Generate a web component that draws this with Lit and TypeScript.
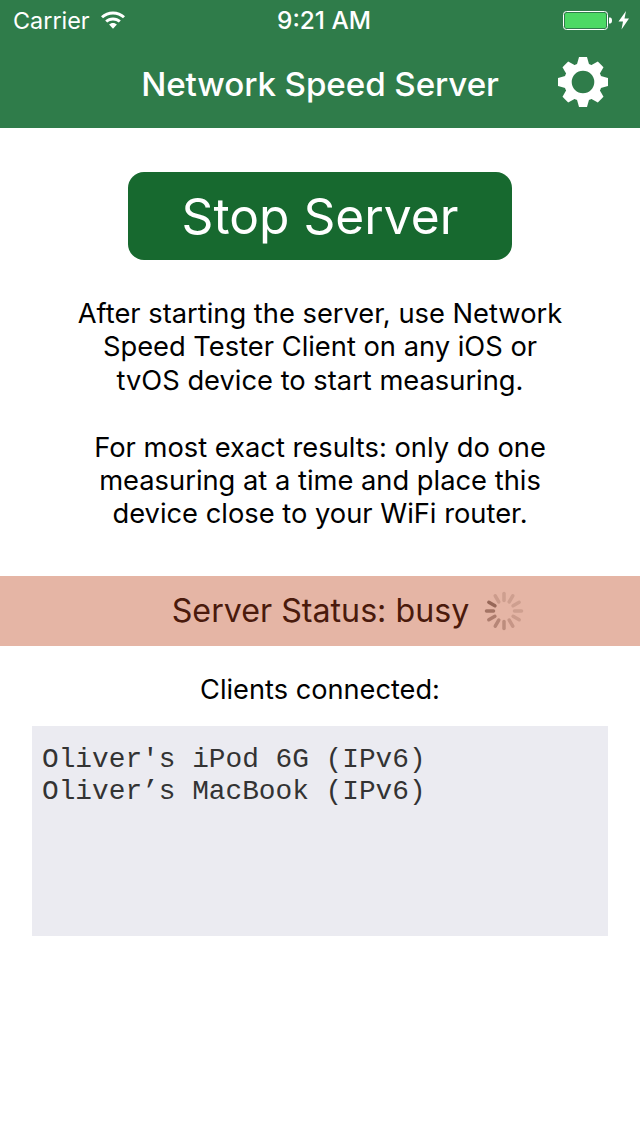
import { LitElement, html, css, svg } from "lit";
import { customElement } from "lit/decorators.js";

const spokes = [
  [90, 0.26], [120, 0.3], [150, 0.36], [180, 0.42], [210, 0.5], [240, 0.16],
  [270, 0.14], [300, 0.14], [330, 0.14], [0, 0.14], [30, 0.16], [60, 0.2],
];

@customElement("app-root")
export class AppRoot extends LitElement {
  static styles = css`
    :host { display: block; width: 640px; height: 1136px; background: #fff; overflow: hidden;
      font-family: Inter, "Liberation Sans", sans-serif; color: #000; }
    .header { height: 128px; background: #2f7c4a; color: #fff; box-sizing: border-box; display: flex; flex-direction: column; }
    .status { height: 40px; display: flex; align-items: center; justify-content: space-between; padding: 0 10px 0 13px; position: relative; font-size: 23.4px; }
    .left { display: flex; align-items: center; gap: 10px; font-weight: 400; }
    .time { position: absolute; left: 8px; right: 0; text-align: center; font-weight: 500; font-size: 24.4px; }
    .right { display: flex; align-items: center; gap: 6px; }
    .nav { flex: 1; display: flex; align-items: center; justify-content: center; position: relative; }
    .title { font-size: 33.2px; font-weight: 500; letter-spacing: -0.1px; }
    .gear { position: absolute; left: 557px; top: 16px; }
    .main { display: flex; flex-direction: column; align-items: center; }
    .btn { margin-top: 44px; width: 384px; height: 88px; border-radius: 16px; background: #17692f; color: #fff;
      display: flex; align-items: center; justify-content: center; font-size: 49.7px; font-weight: 400; }
    .info { margin-top: 37px; font-size: 27.3px; line-height: 33.4px; text-align: center; }
    .gap { height: 33.4px; }
    .bar { margin-top: 45px; width: 100%; height: 70px; background: #e5b5a5; color: #4a1a0c; display: flex; align-items: center; justify-content: center; gap: 15px; font-size: 32.2px; padding-left: 56px; box-sizing: border-box; }
    .clients { margin-top: 27px; font-size: 27.2px; line-height: 34px; }
    .list { margin-top: 19px; width: 576px; height: 210px; background: #ebebf1; box-sizing: border-box; padding: 18px 10px;
      font-family: "Liberation Mono", monospace; font-size: 27.8px; line-height: 32px; color: #333; white-space: pre; }
  `;

  render() {
    return html`
      <div class="header">
        <div class="status">
          <div class="left">
            <span>Carrier</span>
            <svg width="26" height="20" viewBox="0 0 26 20">
              <path fill="#fff" d="M13 1.5C8.4 1.5 4.2 3.3 1 6.2l2 2.1C5.7 5.9 9.2 4.4 13 4.4s7.3 1.5 10 3.9l2-2.1C21.8 3.3 17.6 1.5 13 1.5z"/>
              <path fill="#fff" d="M13 7.5c-3 0-5.7 1.1-7.8 3l2 2.1c1.6-1.4 3.6-2.2 5.8-2.2s4.2.8 5.8 2.2l2-2.1c-2.1-1.9-4.8-3-7.8-3z"/>
              <path fill="#fff" d="M13 13c-1.5 0-2.9.6-3.9 1.5L13 18.7l3.9-4.2C15.9 13.6 14.5 13 13 13z"/>
            </svg>
          </div>
          <div class="time">9:21 AM</div>
          <div class="right">
            <svg width="49" height="20" viewBox="0 0 49 20">
              <rect x="0.5" y="1.5" width="44" height="18" rx="3" fill="none" stroke="#fff" stroke-width="1"/>
              <rect x="2" y="3" width="41" height="15" rx="1.5" fill="#4cd964"/>
              <path fill="#fff" d="M46 7.5h1.2c1 0 1.800 1 1.800 3s-.8 3-1.800 3H46z"/>
            </svg>
            <svg width="12" height="20" viewBox="0 0 12 20">
              <path fill="#fff" d="M8 1 0.5 11.5H5L3.5 19.5 11 8.5H6.5z"/>
            </svg>
          </div>
        </div>
        <div class="nav">
          <div class="title">Network Speed Server</div>
          <svg class="gear" width="52" height="52" viewBox="0 0 52 52">
            <g fill="#fff">
              ${[0, 45, 90, 135, 180, 225, 270, 315].map(a => svg`<path transform="rotate(${a} 26 26)" d="M22 1h8l2.5 9h-13z"/>`)}
              <path fill-rule="evenodd" d="M26 7a19 19 0 1 0 0 38a19 19 0 1 0 0-38zM26 14.7a11.3 11.3 0 1 1 0 22.6a11.3 11.3 0 1 1 0-22.6z"/>
            </g>
          </svg>
        </div>
      </div>
      <div class="main">
        <div class="btn">Stop Server</div>
        <div class="info">
          After starting the server, use Network<br>
          Speed Tester Client on any iOS or<br>
          tvOS device to start measuring.
          <div class="gap"></div>
          For most exact results: only do one<br>
          measuring at a time and place this<br>
          device close to your WiFi router.
        </div>
        <div class="bar">
          <span>Server Status: busy</span>
          <svg width="40" height="40" viewBox="0 0 40 40">
            ${spokes.map(([a, o]) => svg`<line x1="30.5" y1="20" x2="37.5" y2="20" stroke="#4a1a0c" stroke-opacity="${o}" stroke-width="3.5" stroke-linecap="round" transform="rotate(${a} 20 20)"/>`)}
          </svg>
        </div>
        <div class="clients">Clients connected:</div>
        <div class="list">Oliver's iPod 6G (IPv6)
Oliver’s MacBook (IPv6)</div>
      </div>
    `;
  }
}
